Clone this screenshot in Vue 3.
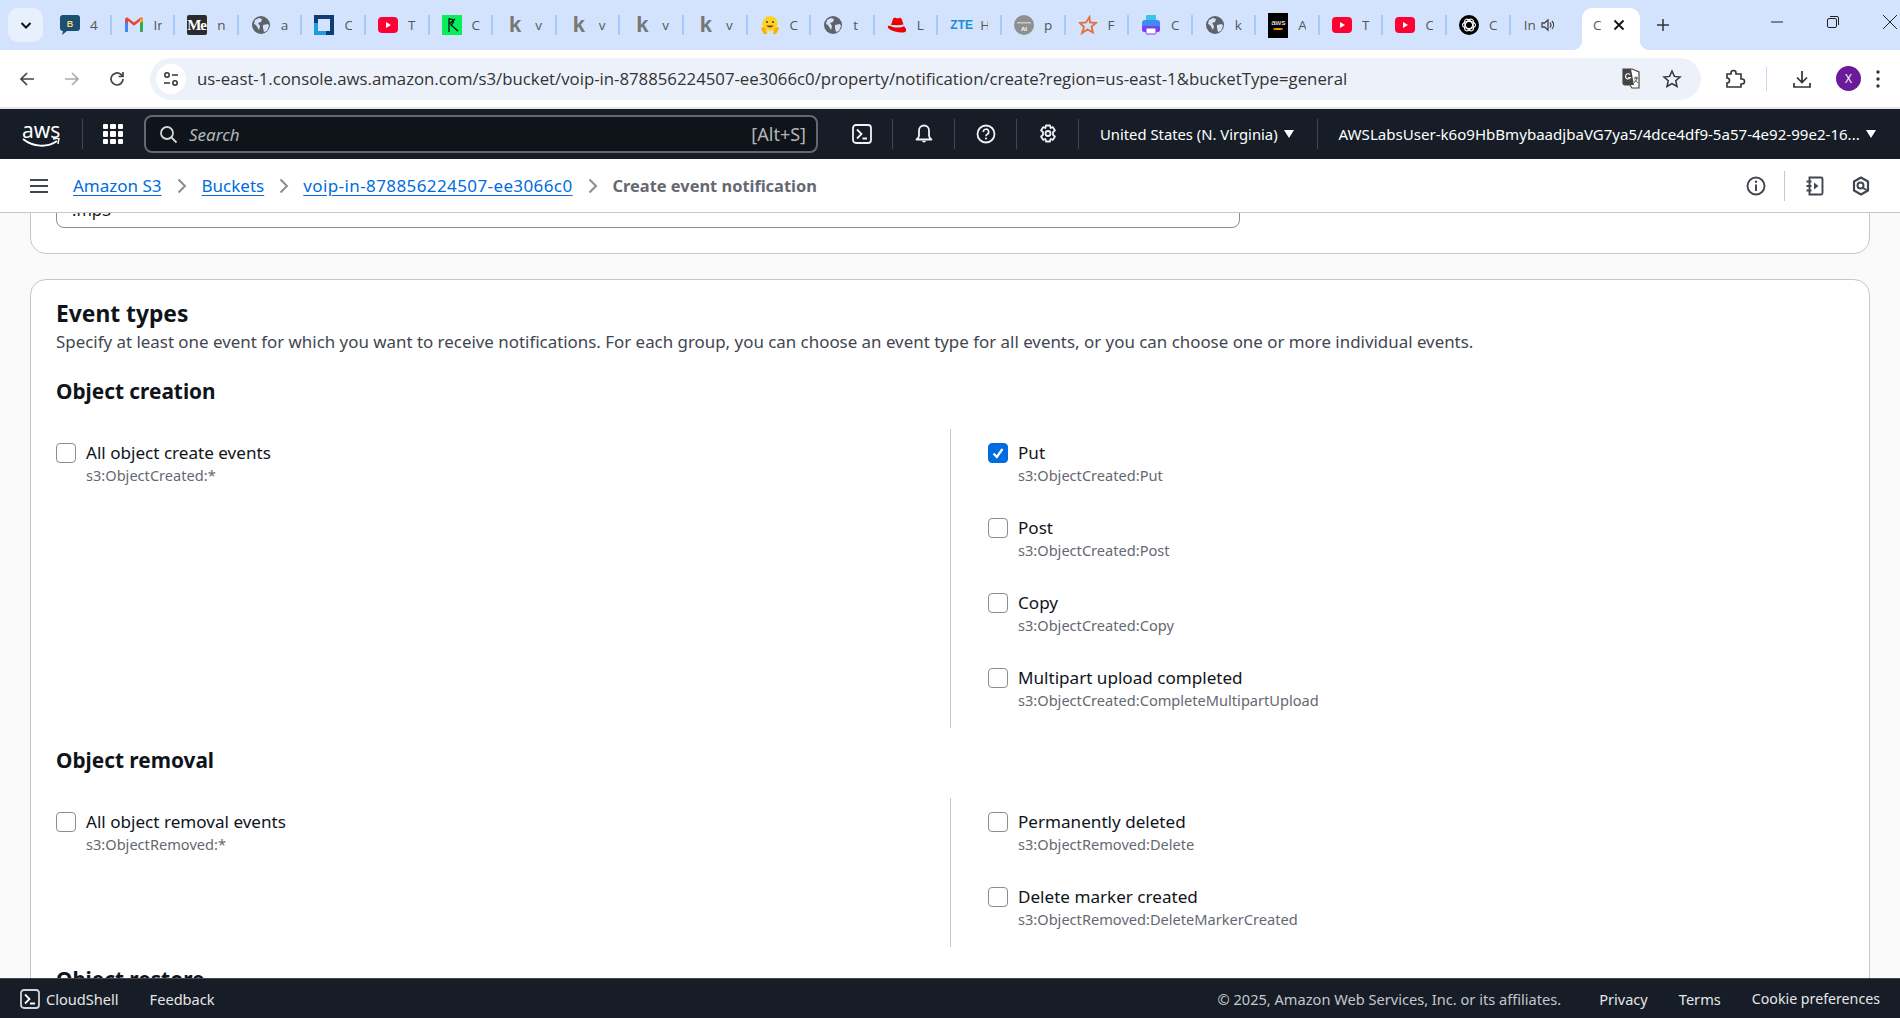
<template>
  <div class="page">
    <div class="tabstrip">
      <button class="tab-search">
        <svg width="14" height="14" viewBox="0 0 14 14"><path d="M2.500 5l4.500 4.500L11.500 5" fill="none" stroke="#111" stroke-width="2"/></svg>
      </button>
      <div class="tabs">
        <div class="tab" v-for="(t, i) in tabs" :key="i">
          <span class="fav">
            <svg v-if="t.icon == 'blog'" viewBox="0 0 20 20"><path d="M3 0h14a3 3 0 0 1 3 3v10a3 3 0 0 1-3 3H7l-5 4 1-4a3 3 0 0 1-3-3V3a3 3 0 0 1 3-3z" fill="#1d4e73"/><text x="10" y="12" text-anchor="middle" class="fav-b">B</text></svg>
            <svg v-else-if="t.icon == 'gmail'" viewBox="0 0 20 20"><path d="M1 17V5l3 2v10H2a1 1 0 0 1-1-1z" fill="#4285f4"/><path d="M19 17V5l-3 2v10h2a1 1 0 0 0 1-1z" fill="#34a853"/><path d="M1 6V4.500C1 3 2.800 2 4 3l6 4.500L16 3c1.300-1 3 0 3 1.500V6l-3 2.200V6l-6 4.700L4 6v2.200z" fill="#ea4335"/><path d="M16 3.200L19 4.500V6l-3 2.200z" fill="#fbbc04"/></svg>
            <span v-else-if="t.icon == 'medium'" class="fav-me">Me</span>
            <svg v-else-if="t.icon == 'globe'" viewBox="0 0 20 20"><circle cx="10" cy="10" r="9" fill="#5f6368"/><path d="M4 5l4-2 3 1-1 3-3 1 2 3-1 4-3-5-2-1zM12 10l5-1 1 2-2 5-3 1-1-4z" fill="#d3e3fd"/></svg>
            <svg v-else-if="t.icon == 'frame'" viewBox="0 0 20 20"><rect width="20" height="20" fill="#0f3d73"/><rect x="4" y="4" width="12" height="12" fill="#d3e3fd"/><path d="M0 8h4v8h8v4H0z" fill="#1f9ce0"/></svg>
            <svg v-else-if="t.icon == 'yt'" viewBox="0 0 20 20"><rect y="2" width="20" height="16" rx="4" fill="#ff0033"/><path d="M8 7l5 3-5 3z" fill="#fff"/></svg>
            <svg v-else-if="t.icon == 'green'" viewBox="0 0 20 20"><rect width="20" height="20" fill="#05ef5d"/><path d="M7 3v14M7 4c5 0 6 3 2 6l7 6M7 9l6-5" fill="none" stroke="#111" stroke-width="1.300"/></svg>
            <span v-else-if="t.icon == 'k'" class="fav-k">k</span>
            <svg v-else-if="t.icon == 'hug'" viewBox="0 0 20 20"><circle cx="10" cy="8.500" r="7.500" fill="#ffd21e"/><circle cx="7" cy="7" r="1" fill="#3a3b45"/><circle cx="13" cy="7" r="1" fill="#3a3b45"/><path d="M6.500 10.500c1 2.500 6 2.500 7 0z" fill="#7a3b2e"/><path d="M1 14c1-3 3-2 5 0l1 5H4zM19 14c-1-3-3-2-5 0l-1 5h3z" fill="#ffb000"/></svg>
            <svg v-else-if="t.icon == 'redhat'" viewBox="0 0 20 20"><path d="M4 10l2-6c.5-1.500 2-1.500 3-1 1 .5 2 .5 3 0 1-.5 2.500 0 3 2l1.500 4.500c-4 1-9 .5-12.500.5z" fill="#e00"/><path d="M1 11c-1 2 2 4 7 5.500 5 1.500 10 1.500 11-.5.600-1.500-.5-3-2-5-2 2-11 2-13 .2-1-.7-2.300-.7-3-.2z" fill="#e00"/></svg>
            <span v-else-if="t.icon == 'zte'" class="fav-zte">ZTE</span>
            <svg v-else-if="t.icon == 'ai'" viewBox="0 0 20 20"><circle cx="10" cy="10" r="10" fill="#8f8f8f"/><rect x="3" y="7" width="14" height="1.500" fill="#ccc"/><text x="10" y="16" text-anchor="middle" class="fav-ai">AI</text></svg>
            <svg v-else-if="t.icon == 'star'" viewBox="0 0 20 20"><path d="M11.500 2l.5 5.500 6 .5-4.500 3.500 1.500 6-5.500-3-5.500 3.500 2-6L2 8l6-.5z" fill="none" stroke="#e0703a" stroke-width="1.800"/></svg>
            <svg v-else-if="t.icon == 'print'" viewBox="0 0 20 20"><rect x="5" y="0" width="10" height="6" rx="1" fill="#3fc1e8"/><rect x="1" y="5" width="18" height="11" rx="3" fill="#3f8cf0"/><rect x="1" y="11" width="18" height="6" rx="2" fill="#7a3ff0"/><rect x="5" y="13" width="10" height="6" rx="1" fill="#fff" stroke="#7a3ff0"/></svg>
            <span v-else-if="t.icon == 'aws'" class="fav-aws">aws<i></i></span>
            <svg v-else-if="t.icon == 'openai'" viewBox="0 0 20 20"><circle cx="10" cy="10" r="10" fill="#000"/><g fill="none" stroke="#fff" stroke-width="1.100"><ellipse cx="10" cy="10" rx="6.500" ry="3.600"/><ellipse cx="10" cy="10" rx="6.500" ry="3.600" transform="rotate(60 10 10)"/><ellipse cx="10" cy="10" rx="6.500" ry="3.600" transform="rotate(120 10 10)"/></g></svg>
          </span>
          <span class="tab-title">{{ t.title }}</span>
        </div>
        <div class="tab audio">
          <span class="tab-title in">In</span>
          <svg class="speaker" width="14" height="14" viewBox="0 0 14 14"><path d="M1 5v4h2.500L7 12V2L3.500 5z" fill="none" stroke="#444" stroke-width="1.300"/><path d="M9 4.500c1.200 1.500 1.200 3.500 0 5M11 3c2 2.300 2 5.700 0 8" fill="none" stroke="#444" stroke-width="1.200"/></svg>
        </div>
      </div>
      <div class="tab-active">
        <span class="tab-title">C</span>
        <svg width="12" height="12" viewBox="0 0 12 12"><path d="M1.500 1.500l9 9M10.500 1.500l-9 9" stroke="#111" stroke-width="1.800"/></svg>
      </div>
      <svg class="newtab" width="14" height="14" viewBox="0 0 14 14"><path d="M7 1v12M1 7h12" stroke="#333" stroke-width="1.500"/></svg>
      <div class="winctl">
        <svg width="14" height="14" viewBox="0 0 14 14"><path d="M1 7h12" stroke="#222"/></svg>
        <svg width="14" height="14" viewBox="0 0 14 14"><rect x="1.500" y="3.500" width="9" height="9" rx="1.500" fill="none" stroke="#222"/><path d="M4 1.500h7a1.500 1.500 0 0 1 1.500 1.500v7" fill="none" stroke="#222"/></svg>
        <svg width="16" height="16" viewBox="0 0 16 16"><path d="M1 1l14 14M15 1L1 15" stroke="#222"/></svg>
      </div>
    </div>

    <div class="toolbar">
      <svg class="tb-ico" width="18" height="18" viewBox="0 0 18 18"><path d="M16 9H3M9 3L3 9l6 6" fill="none" stroke="#444" stroke-width="1.700"/></svg>
      <svg class="tb-ico" width="18" height="18" viewBox="0 0 18 18"><path d="M2 9h13M9 3l6 6-6 6" fill="none" stroke="#aaa" stroke-width="1.700"/></svg>
      <svg class="tb-ico" width="18" height="18" viewBox="0 0 18 18"><path d="M15 9a6 6 0 1 1-2-4.500L15 6.500M15 2v4.500h-4.500" fill="none" stroke="#444" stroke-width="1.700"/></svg>
      <div class="urlbar">
        <span class="siteinfo">
          <svg width="16" height="16" viewBox="0 0 16 16"><g fill="none" stroke="#333" stroke-width="1.500"><circle cx="4" cy="4" r="2.200"/><path d="M9 4h6M1 12h6"/><circle cx="12" cy="12" r="2.200"/></g></svg>
        </span>
        <span class="url">us-east-1.console.aws.amazon.com/s3/bucket/voip-in-878856224507-ee3066c0/property/notification/create?region=us-east-1&amp;bucketType=general</span>
        <svg width="21" height="21" viewBox="0 0 21 21"><path d="M1 1h9l7 3v16l-7 0-2-3H3a2 2 0 0 1-2-2z" fill="#fff" stroke="#444" stroke-width="1.200"/><path d="M1 1h8l3 16H3a2 2 0 0 1-2-2z" fill="#444"/><path d="M8 6.500a2.600 2.600 0 1 0 .4 3H6.200" fill="none" stroke="#fff" stroke-width="1.100"/><path d="M12 10h4M14 8.500v1.500M15 10c-.3 2-1.500 3.500-3 4.500M12.800 11.500c.6 1.300 1.500 2.300 3 3" fill="none" stroke="#444"/></svg>
        <svg class="star" width="20" height="20" viewBox="0 0 20 20"><path d="M10 2l2.400 5.400 5.600.6-4.200 3.800 1.200 5.700L10 14.600l-5 2.900 1.200-5.700L2 8l5.600-.6z" fill="none" stroke="#333" stroke-width="1.500"/></svg>
      </div>
      <svg class="tb-right" width="22" height="22" viewBox="0 0 22 22"><path d="M3 6h4V5a2.500 2.500 0 0 1 5 0v1h5v5h1a2.500 2.500 0 0 1 0 5h-1v3H3v-4a2.500 2.500 0 0 0 0-5z" fill="none" stroke="#333" stroke-width="1.600"/></svg>
      <span class="tb-sep"></span>
      <svg class="tb-dl" width="20" height="20" viewBox="0 0 20 20"><path d="M10 2v11M5 8.500l5 5 5-5M2 14v4h16v-4" fill="none" stroke="#333" stroke-width="1.700"/></svg>
      <span class="avatar">X</span>
      <svg class="tb-more" width="4" height="18" viewBox="0 0 4 18"><circle cx="2" cy="2" r="1.700" fill="#333"/><circle cx="2" cy="9" r="1.700" fill="#333"/><circle cx="2" cy="16" r="1.700" fill="#333"/></svg>
    </div>

    <div class="topnav">
      <span class="aws-logo">aws<svg width="38" height="10" viewBox="0 0 38 10"><path d="M1 1c10 8 24 9 34 2" fill="none" stroke="#fff" stroke-width="2"/><path d="M31 1l6-1-1 6" fill="none" stroke="#fff" stroke-width="1.500"/></svg></span>
      <span class="nav-sep first"></span>
      <span class="grid-ico"><i v-for="n in 9" :key="n"></i></span>
      <div class="search">
        <svg width="19" height="19" viewBox="0 0 19 19"><circle cx="8" cy="8" r="6" fill="none" stroke="#d1d5db" stroke-width="1.800"/><path d="M12.500 12.500l5 5" stroke="#d1d5db" stroke-width="1.800"/></svg>
        <span class="search-ph">Search</span>
        <span class="search-key">[Alt+S]</span>
      </div>
      <div class="nav-ico term">
        <svg width="20" height="20" viewBox="0 0 20 20"><rect x="1" y="1" width="18" height="18" rx="3" fill="none" stroke="#f3f3f7" stroke-width="1.800"/><path d="M5 5.500L9.500 10 5 14.500M10.500 14.500h4.500" fill="none" stroke="#f3f3f7" stroke-width="1.800"/></svg>
      </div>
      <span class="nav-sep"></span>
      <div class="nav-ico">
        <svg width="20" height="20" viewBox="0 0 20 20"><path d="M2.500 15.500c1.500-1 2.500-2 2.500-4V6.500a5 5 0 0 1 10 0v5c0 2 1 3 2.500 4z" fill="none" stroke="#f3f3f7" stroke-width="1.800" stroke-linejoin="round"/><path d="M7.800 16.800a2.300 2.300 0 0 0 4.400 0z" fill="#f3f3f7"/></svg>
      </div>
      <span class="nav-sep"></span>
      <div class="nav-ico">
        <svg width="20" height="20" viewBox="0 0 20 20"><circle cx="10" cy="10" r="8.500" fill="none" stroke="#f3f3f7" stroke-width="1.800"/><path d="M7.300 8a2.700 2.700 0 1 1 4 2.300c-.9.500-1.300 1-1.300 2" fill="none" stroke="#f3f3f7" stroke-width="1.700"/><circle cx="10" cy="14.500" r="1.100" fill="#f3f3f7"/></svg>
      </div>
      <span class="nav-sep"></span>
      <div class="nav-ico">
        <svg width="20" height="20" viewBox="0 0 20 20"><path d="M8 1.500h4l.6 2.500 2.300-.9 2 3.400-1.900 1.700v2.600l1.900 1.700-2 3.400-2.300-.9-.6 2.500H8l-.6-2.500-2.300.9-2-3.400L5 10.800V8.200L3.100 6.500l2-3.400 2.300.9z" fill="none" stroke="#f3f3f7" stroke-width="1.800" stroke-linejoin="round"/><circle cx="10" cy="9.500" r="2.500" fill="none" stroke="#f3f3f7" stroke-width="1.800"/></svg>
      </div>
      <span class="nav-sep"></span>
      <span class="nav-text region">United States (N. Virginia)</span>
      <i class="caret"></i>
      <span class="nav-sep wide"></span>
      <span class="nav-text account">AWSLabsUser-k6o9HbBmybaadjbaVG7ya5/4dce4df9-5a57-4e92-99e2-16...</span>
      <i class="caret"></i>
    </div>

    <div class="crumbbar">
      <svg class="burger" width="18" height="16" viewBox="0 0 18 16"><path d="M0 2h18M0 8h18M0 14h18" stroke="#424650" stroke-width="2"/></svg>
      <nav class="crumbs">
        <template v-for="(c, i) in crumbs" :key="i">
          <a class="crumb">{{ c }}</a>
          <svg class="chev" width="10" height="16" viewBox="0 0 10 16"><path d="M1.500 1.500L8 8l-6.500 6.500" fill="none" stroke="#8c8c94" stroke-width="2"/></svg>
        </template>
        <span class="crumb-now">Create event notification</span>
      </nav>
      <div class="crumb-tools">
        <svg width="20" height="20" viewBox="0 0 20 20"><circle cx="10" cy="10" r="8.500" fill="none" stroke="#424650" stroke-width="1.900"/><path d="M10 8.500V15" stroke="#424650" stroke-width="2"/><circle cx="10" cy="5.800" r="1.200" fill="#424650"/></svg>
        <span class="tools-sep"></span>
        <svg width="20" height="20" viewBox="0 0 20 20"><path d="M4.500 1.500h11.500a1.500 1.500 0 0 1 1.500 1.500v14a1.500 1.500 0 0 1-1.500 1.500H4.500zM1.500 5.500h5M1.500 10h5M1.500 14.500h5" fill="none" stroke="#424650" stroke-width="1.900"/><path d="M9 6.500l4.500 3.500L9 13.500z" fill="#424650"/></svg>
        <svg class="hexa" width="20" height="20" viewBox="0 0 20 20"><path d="M10 1.500l7 4v9l-7 4-7-4v-9z" fill="none" stroke="#424650" stroke-width="2.200" stroke-linejoin="round"/><circle cx="9.500" cy="9.500" r="3" fill="none" stroke="#424650" stroke-width="2"/><path d="M12 12l3.500 2" stroke="#424650" stroke-width="2"/></svg>
      </div>
    </div>

    <main class="scroller">
      <div class="card card-top">
        <div class="suffix-input">.mp3</div>
      </div>
      <section class="card card-events">
        <h2>Event types</h2>
        <p class="desc">Specify at least one event for which you want to receive notifications. For each group, you can choose an event type for all events, or you can choose one or more individual events.</p>
        <div class="group" v-for="g in groups" :key="g.title">
          <h3>{{ g.title }}</h3>
          <div class="columns" v-if="g.all">
            <div class="col-left">
              <label class="check">
                <span class="box"></span>
                <span><span class="lbl">{{ g.all.label }}</span><span class="api">{{ g.all.api }}</span></span>
              </label>
            </div>
            <div class="col-right">
              <label class="check" v-for="o in g.options" :key="o.api">
                <span class="box" :class="{ on: o.on }">
                  <svg v-if="o.on" width="14" height="14" viewBox="0 0 14 14"><path d="M2.500 7.500L5.800 11l5.700-8" fill="none" stroke="#fff" stroke-width="2.200"/></svg>
                </span>
                <span><span class="lbl">{{ o.label }}</span><span class="api">{{ o.api }}</span></span>
              </label>
            </div>
          </div>
        </div>
      </section>
    </main>

    <footer class="footer">
      <svg width="20" height="20" viewBox="0 0 20 20"><rect x="1" y="1" width="18" height="18" rx="3" fill="none" stroke="#d1d5db" stroke-width="1.800"/><path d="M5 5.500L9.500 10 5 14.500M10 14.500h5" fill="none" stroke="#fff" stroke-width="1.800"/></svg>
      <span class="foot-link cs">CloudShell</span>
      <span class="foot-link fb">Feedback</span>
      <span class="copy">© 2025, Amazon Web Services, Inc. or its affiliates.</span>
      <span class="foot-link">Privacy</span>
      <span class="foot-link">Terms</span>
      <span class="foot-link cookie">Cookie preferences</span>
    </footer>
  </div>
</template>

<script setup>
const tabs = [
  { icon: 'blog', title: '4' },
  { icon: 'gmail', title: 'In' },
  { icon: 'medium', title: 'n' },
  { icon: 'globe', title: 'a' },
  { icon: 'frame', title: 'C' },
  { icon: 'yt', title: 'T' },
  { icon: 'green', title: 'C' },
  { icon: 'k', title: 'v' },
  { icon: 'k', title: 'v' },
  { icon: 'k', title: 'v' },
  { icon: 'k', title: 'v' },
  { icon: 'hug', title: 'C' },
  { icon: 'globe', title: 't' },
  { icon: 'redhat', title: 'L' },
  { icon: 'zte', title: 'H' },
  { icon: 'ai', title: 'p' },
  { icon: 'star', title: 'F' },
  { icon: 'print', title: 'C' },
  { icon: 'globe', title: 'k' },
  { icon: 'aws', title: 'A' },
  { icon: 'yt', title: 'T' },
  { icon: 'yt', title: 'C' },
  { icon: 'openai', title: 'C' },
]

const crumbs = ['Amazon S3', 'Buckets', 'voip-in-878856224507-ee3066c0']

const groups = [
  {
    title: 'Object creation',
    all: { label: 'All object create events', api: 's3:ObjectCreated:*' },
    options: [
      { label: 'Put', api: 's3:ObjectCreated:Put', on: true },
      { label: 'Post', api: 's3:ObjectCreated:Post' },
      { label: 'Copy', api: 's3:ObjectCreated:Copy' },
      { label: 'Multipart upload completed', api: 's3:ObjectCreated:CompleteMultipartUpload' },
    ],
  },
  {
    title: 'Object removal',
    all: { label: 'All object removal events', api: 's3:ObjectRemoved:*' },
    options: [
      { label: 'Permanently deleted', api: 's3:ObjectRemoved:Delete' },
      { label: 'Delete marker created', api: 's3:ObjectRemoved:DeleteMarkerCreated' },
    ],
  },
  { title: 'Object restore' },
]
</script>

<style scoped>
.page {
  height: 1018px;
  width: 1900px;
  display: flex;
  flex-direction: column;
  overflow: hidden;
  font-family: "Noto Sans", sans-serif;
  background: #fafafa;
  color: #0f141a;
}

/* browser chrome */
.tabstrip {
  height: 50px;
  flex: none;
  background: #d3e3fd;
  display: flex;
  align-items: center;
  padding-left: 8px;
  overflow: hidden;
  position: relative;
}
.tab-search {
  width: 35px;
  height: 34px;
  margin-right: 5px;
  border: 0;
  border-radius: 10px;
  background: #e8f0fe;
  display: flex;
  align-items: center;
  justify-content: center;
  padding: 0;
}
.tabs {
  display: flex;
  width: 1534px;
}
.tab {
  width: 63.6px;
  height: 20px;
  flex: none;
  box-sizing: border-box;
  display: flex;
  align-items: center;
  padding-left: 12px;
  border-right: 2px solid #a8c7fa;
}
.tab:last-child {
  border-right: 0;
}
.fav {
  width: 20px;
  height: 20px;
  flex: none;
  display: block;
  margin-right: 10px;
}
.fav svg {
  display: block;
  width: 20px;
  height: 20px;
}
.fav-b {
  font: bold 9px "Liberation Sans", sans-serif;
  fill: #f5d76e;
}
.fav-ai {
  font: bold 6px "Liberation Sans", sans-serif;
  fill: #fff;
}
.fav-me {
  display: block;
  width: 20px;
  height: 20px;
  overflow: hidden;
  border-radius: 2px;
  background: #2b2b2b;
  color: #fff;
  font: bold 15px/20px "Liberation Serif", serif;
  letter-spacing: -1px;
}
.fav-k {
  display: block;
  color: #777;
  font: bold 22px/20px "Liberation Sans", sans-serif;
  text-align: center;
}
.fav-zte {
  display: block;
  color: #1a8fd8;
  font: bold 12px/20px "Liberation Sans", sans-serif;
  text-align: center;
}
.fav-aws {
  display: block;
  width: 20px;
  height: 25px;
  margin-top: -2px;
  background: #000;
  color: #fff;
  font: 8px/20px "Liberation Sans", sans-serif;
  text-align: center;
  position: relative;
}
.fav-aws i {
  position: absolute;
  left: 5px;
  top: 15px;
  width: 10px;
  height: 2px;
  border-radius: 50%;
  background: #ff9900;
}
.tab-title {
  font: 13.5px "Open Sans", sans-serif;
  color: #555;
  width: 8px;
  overflow: hidden;
  white-space: nowrap;
}
.audio {
  padding-left: 13px;
}
.in {
  width: 12px;
  margin-right: 5px;
}
.speaker {
  flex: none;
}
.tab-active {
  width: 58px;
  height: 42px;
  margin-top: 8px;
  flex: none;
  box-sizing: border-box;
  background: #fff;
  border-radius: 10px 10px 0 0;
  display: flex;
  align-items: center;
  padding: 0 10px 8px 11px;
  position: relative;
}
.tab-active::before,
.tab-active::after {
  content: '';
  position: absolute;
  bottom: 0;
  width: 10px;
  height: 10px;
}
.tab-active::before {
  left: -10px;
  background: radial-gradient(circle at 0 0, #d3e3fd 10px, #fff 10.5px);
}
.tab-active::after {
  right: -10px;
  background: radial-gradient(circle at 100% 0, #d3e3fd 10px, #fff 10.5px);
}
.tab-active svg {
  margin-left: 10px;
  flex: none;
}
.tab-active .tab-title {
  width: 10px;
}
.newtab {
  margin-left: 16px;
  flex: none;
}
.winctl {
  display: flex;
  align-items: center;
  gap: 42px;
  margin-left: 100px;
  flex: none;
  height: 44px;
  margin-bottom: 6px;
}

.toolbar {
  height: 57px;
  flex: none;
  background: #fff;
  display: flex;
  align-items: center;
  box-sizing: border-box;
  padding-left: 18px;
}
.tb-ico {
  margin-right: 27px;
  flex: none;
}
.urlbar {
  width: 1551px;
  height: 42px;
  margin-left: -3px;
  flex: none;
  box-sizing: border-box;
  background: #edf2fa;
  border-radius: 21px;
  display: flex;
  align-items: center;
  padding-left: 6px;
}
.siteinfo {
  width: 30px;
  height: 30px;
  border-radius: 50%;
  background: #fff;
  display: flex;
  align-items: center;
  justify-content: center;
  flex: none;
}
.url {
  margin-left: 11px;
  width: 1425px;
  flex: none;
  font: 16.78px "Open Sans", sans-serif;
  color: #333;
  white-space: nowrap;
}
.star {
  margin-left: 19px;
  flex: none;
}
.tb-right {
  margin-left: 23px;
}
.tb-sep {
  width: 1px;
  height: 24px;
  margin-left: 20px;
  background: #c7d7f0;
}
.tb-dl {
  margin-left: 25px;
}
.avatar {
  width: 25px;
  height: 25px;
  margin-left: 24px;
  border-radius: 50%;
  background: #6a1b9a;
  color: #fff;
  font: 12px/25px "Open Sans", sans-serif;
  text-align: center;
}
.tb-more {
  margin-left: 15px;
}

/* console header */
.topnav {
  height: 52px;
  flex: none;
  box-sizing: border-box;
  border-top: 2px solid #e6e6e6;
  background: #161d26;
  color: #fff;
  display: flex;
  align-items: center;
  padding-left: 22px;
}
.aws-logo {
  width: 38px;
  font-size: 21px;
  line-height: 16px;
  text-align: center;
  position: relative;
  top: -4px;
  height: 16px;
}
.aws-logo svg {
  display: block;
  margin-top: 0;
}
.nav-sep {
  width: 1px;
  height: 30px;
  background: #424650;
  flex: none;
}
.nav-sep.first {
  margin-left: 22px;
}
.nav-sep.wide {
  margin-left: 23px;
}
.grid-ico {
  width: 20px;
  height: 20px;
  margin-left: 20px;
  display: grid;
  grid-template-columns: repeat(3, 1fr);
  gap: 2px;
}
.grid-ico i {
  background: #fff;
  border-radius: 1px;
}
.search {
  width: 674px;
  height: 38px;
  margin-left: 21px;
  flex: none;
  box-sizing: border-box;
  background: #0f141a;
  border: 2px solid #656871;
  border-radius: 8px;
  display: flex;
  align-items: center;
  padding: 0 10px 0 13px;
}
.search-ph {
  margin-left: 11px;
  flex: 1;
  font-size: 17px;
  font-style: italic;
  color: #b4b4bb;
}
.search-key {
  font-size: 18px;
  color: #b4b4bb;
}
.nav-ico {
  width: 61px;
  display: flex;
  justify-content: center;
  flex: none;
}
.nav-ico.term {
  width: 74px;
  padding-left: 14px;
  box-sizing: border-box;
}
.nav-text {
  color: #fff;
  white-space: nowrap;
}
.region {
  margin-left: 21px;
  font-size: 14.8px;
}
.account {
  margin-left: 21px;
  font-size: 15.07px;
}
.caret {
  width: 0;
  height: 0;
  margin-left: 6px;
  border-left: 5px solid transparent;
  border-right: 5px solid transparent;
  border-top: 8px solid #fff;
}

.crumbbar {
  height: 54px;
  flex: none;
  box-sizing: border-box;
  background: #fff;
  border-bottom: 1px solid #c6c6cd;
  display: flex;
  align-items: center;
  padding: 0 29px 0 30px;
  position: relative;
  z-index: 1;
}
.crumbs {
  margin-left: 25px;
  display: flex;
  align-items: center;
  font-size: 17px;
}
.crumb {
  color: #006ce0;
  text-decoration: underline;
  text-underline-offset: 3px;
  white-space: nowrap;
}
.crumb:nth-of-type(3) {
  letter-spacing: 0.4px;
  margin-left: -1px;
}
.chev {
  margin: 0 15px;
  flex: none;
}
.crumb-now {
  font-weight: 700;
  font-size: 16.4px;
  color: #656871;
  white-space: nowrap;
}
.crumb-tools {
  margin-left: auto;
  display: flex;
  align-items: center;
}
.tools-sep {
  width: 1px;
  height: 30px;
  margin: 0 20px 0 18px;
  background: #c6c6cd;
}
.hexa {
  margin-left: 26px;
}

/* page */
.scroller {
  flex: 1;
  min-height: 0;
  overflow: hidden;
  padding: 0 30px;
}
.card {
  background: #fff;
  border: 1px solid #c6c6cd;
  border-radius: 16px;
  box-sizing: border-box;
  padding: 0 25px;
}
.card-top {
  height: 81px;
  margin-top: -40px;
  padding-top: 0;
  display: flex;
  align-items: flex-end;
  padding-bottom: 25px;
}
.suffix-input {
  width: 1184px;
  height: 34px;
  box-sizing: border-box;
  border: 1px solid #8c8c94;
  border-radius: 8px;
  padding: 0 15px;
  font-size: 16.500px;
  line-height: 30px;
}
.card-events {
  margin-top: 25px;
  padding-top: 19px;
  padding-bottom: 40px;
}
h2 {
  margin: 0;
  font-size: 22.8px;
  line-height: 30px;
  font-weight: 700;
}
.desc {
  margin: 3px 0 0;
  font-size: 16.900px;
  line-height: 20px;
  color: #424650;
}
h3 {
  margin: 0;
  font-size: 20.8px;
  line-height: 28px;
  font-weight: 700;
}
.group {
  margin-top: 18px;
}
.group:first-of-type {
  margin-top: 25px;
}
.columns {
  display: grid;
  grid-template-columns: 894px 1fr;
  margin-top: 24px;
}
.col-left,
.col-right {
  display: flex;
  flex-direction: column;
  gap: 29px;
  padding-top: 14px;
  padding-bottom: 14px;
}
.col-right {
  border-left: 1px solid #c6c6cd;
  padding-left: 37px;
}
.check {
  display: flex;
  align-items: flex-start;
  gap: 10px;
}
.box {
  width: 20px;
  height: 20px;
  flex: none;
  box-sizing: border-box;
  border: 1.500px solid #8c8c94;
  border-radius: 4px;
  background: #fff;
  display: flex;
  align-items: center;
  justify-content: center;
}
.box.on {
  background: #006ce0;
  border-color: #006ce0;
}
.lbl {
  display: block;
  font-size: 17.1px;
  line-height: 20px;
}
.api {
  display: block;
  margin-top: 0;
  margin-bottom: 1px;
  font-size: 14.6px;
  line-height: 25px;
  color: #656871;
}

.footer {
  height: 40px;
  flex: none;
  box-sizing: border-box;
  border-top: 1px solid #424650;
  background: #161d26;
  display: flex;
  align-items: center;
  padding: 0 20px;
  gap: 31px;
  font-size: 14.6px;
  position: relative;
  z-index: 1;
}
.foot-link {
  color: #e6e6e8;
  white-space: nowrap;
}
.cs {
  margin-left: -25px;
}
.fb {
  margin-left: 0;
}
.cookie {
  font-size: 14.2px;
}
.copy {
  margin-left: auto;
  margin-right: 7px;
  color: #c6c6cd;
  white-space: nowrap;
}
</style>

<style>
html,
body {
  margin: 0;
  overflow: hidden;
}
</style>
